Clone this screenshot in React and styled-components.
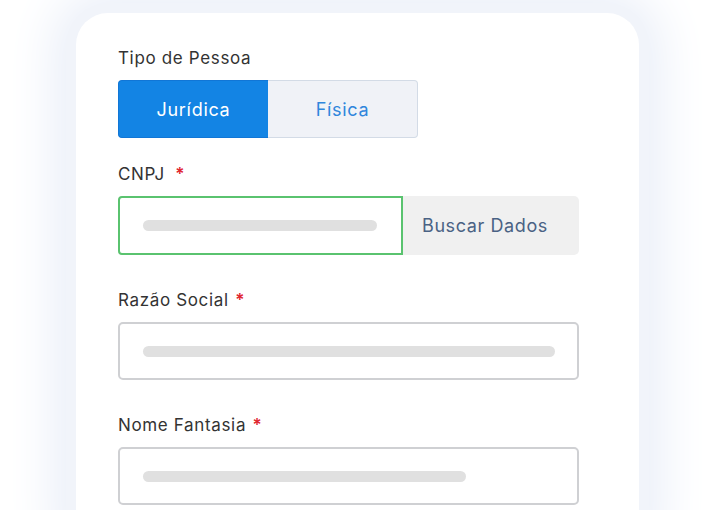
import React, { useState } from "react";
import styled, { createGlobalStyle } from "styled-components";

const GlobalStyle = createGlobalStyle`
    html, body {
        margin: 0;
        padding: 0;
        background: #ffffff;
        overflow: hidden;
    }
    * {
        box-sizing: border-box;
    }
`;

function App() {
    const [tipo, setTipo] = useState("juridica");

    return (
        <>
            <GlobalStyle />
            <Page>
                <Card>
                    <Field>
                        <Label>Tipo de Pessoa</Label>
                        <Toggle>
                            <ToggleButton
                                $active={tipo === "juridica"}
                                onClick={() => setTipo("juridica")}
                            >
                                Jurídica
                            </ToggleButton>
                            <ToggleButton
                                $active={tipo === "fisica"}
                                onClick={() => setTipo("fisica")}
                            >
                                Física
                            </ToggleButton>
                        </Toggle>
                    </Field>

                    <Field $space={26}>
                        <Label>
                            CNPJ <Required $wide>*</Required>
                        </Label>
                        <InputGroup>
                            <Input $valid $joined>
                                <Placeholder $width={234} />
                            </Input>
                            <SearchButton>Buscar Dados</SearchButton>
                        </InputGroup>
                    </Field>

                    <Field $space={35}>
                        <Label>
                            Razão Social <Required>*</Required>
                        </Label>
                        <Input>
                            <Placeholder $width={414} />
                        </Input>
                    </Field>

                    <Field $space={35}>
                        <Label>
                            Nome Fantasia <Required>*</Required>
                        </Label>
                        <Input>
                            <Placeholder $width={323} />
                        </Input>
                    </Field>
                </Card>
            </Page>
        </>
    );
}

const Page = styled.main`
    width: 716px;
    height: 510px;
    padding: 13px 0 0 76px;
    background: #ffffff;
    font-family: Inter, "Noto Sans", "Liberation Sans", sans-serif;
`;

const Card = styled.section`
    width: 563px;
    min-height: 540px;
    padding: 35px 42px 0;
    display: flex;
    flex-direction: column;
    background: #ffffff;
    border-radius: 32px;
    box-shadow: 0 0 0 10px #f1f4fa, 0 0 50px 22px #e9eef8;
`;

const Field = styled.div`
    display: flex;
    flex-direction: column;
    gap: 12px;
    margin-top: ${(props) => props.$space || 0}px;
`;

const Label = styled.label`
    height: 20px;
    line-height: 20px;
    font-size: 17px;
    color: #333333;
    letter-spacing: 0.65px;
`;

const Required = styled.span`
    margin-left: ${(props) => (props.$wide ? "5px" : "1px")};
    color: #e0262f;
    font-weight: 600;
`;

const Toggle = styled.div`
    width: 300px;
    height: 58px;
    display: grid;
    grid-template-columns: 1fr 1fr;
`;

const ToggleButton = styled.button`
    font-family: inherit;
    font-size: 18px;
    letter-spacing: 0.7px;
    cursor: pointer;
    border: 1px solid ${(props) => (props.$active ? "#1176d6" : "#d3dbe6")};
    background: ${(props) => (props.$active ? "#1384e4" : "#f0f2f7")};
    color: ${(props) => (props.$active ? "#ffffff" : "#2f86dc")};
    &:first-child {
        border-radius: 4px 0 0 4px;
        border-right: none;
    }
    &:last-child {
        border-radius: 0 4px 4px 0;
        border-left: none;
    }
`;

const InputGroup = styled.div`
    display: flex;
    width: 461px;
    height: 59px;
`;

const Input = styled.div`
    width: ${(props) => (props.$joined ? "285px" : "461px")};
    height: ${(props) => (props.$joined ? "59px" : "58px")};
    padding: 0 22px 0 23px;
    display: flex;
    align-items: center;
    background: #ffffff;
    border: ${(props) => (props.$valid ? "2px solid #5ac36f" : "2px solid #cfd0d3")};
    border-radius: ${(props) => (props.$joined ? "4px 0 0 4px" : "5px")};
`;

const Placeholder = styled.span`
    display: block;
    width: ${(props) => props.$width}px;
    height: 11px;
    border-radius: 6px;
    background: #e0e0e0;
`;

const SearchButton = styled.button`
    flex: 1;
    padding: 0 0 0 19px;
    text-align: left;
    font-family: inherit;
    font-size: 18px;
    letter-spacing: 0.6px;
    color: #4a6284;
    background: #f0f0f0;
    border: none;
    border-radius: 0 5px 5px 0;
    cursor: pointer;
`;

export default App;
